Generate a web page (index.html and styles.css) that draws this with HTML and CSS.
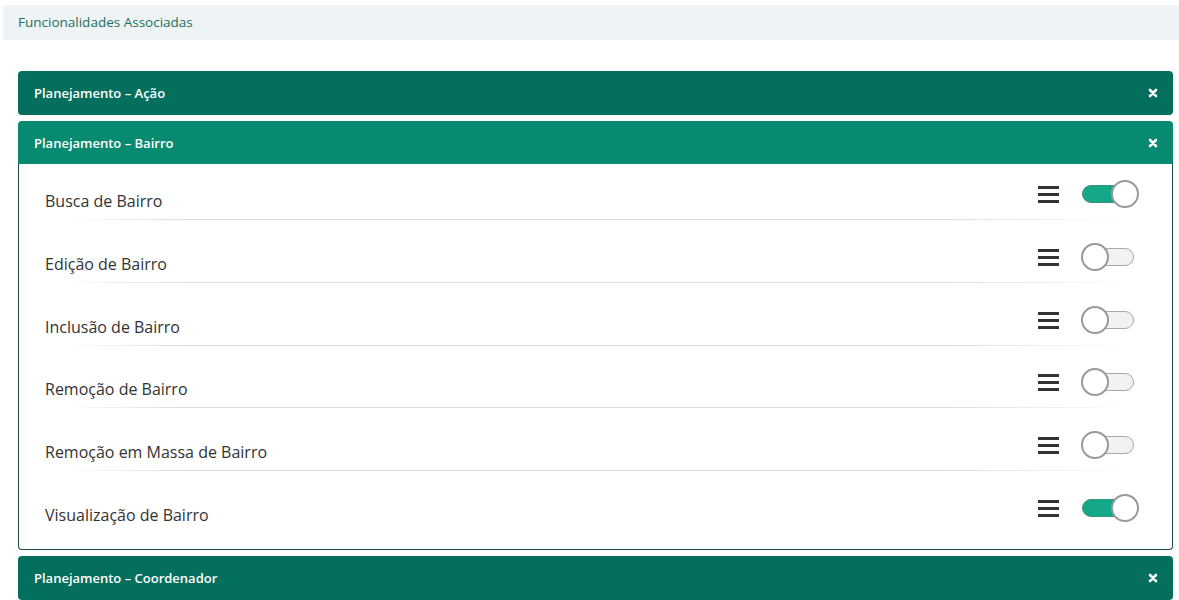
FILE: index.html
```html
<!DOCTYPE html>
<html lang="pt">
<head>
    <meta charset="UTF-8">
    <meta name="viewport" content="width=device-width, initial-scale=1.0">
    <title>Funcionalidades Associadas</title>
    <link rel="stylesheet" href="styles.css">
</head>
<body>
    <div class="page">
        <div class="section-title">Funcionalidades Associadas</div>

        <div class="panels">
            <div class="panel">
                <div class="panel-header dark">
                    <span>Planejamento – Ação</span>
                    <svg class="close" width="10" height="10" viewBox="0 0 10 10"><path d="M2 2 L8 8 M8 2 L2 8" stroke="#fff" stroke-width="2.6" stroke-linecap="round"/></svg>
                </div>
            </div>

            <div class="panel open">
                <div class="panel-header light">
                    <span>Planejamento – Bairro</span>
                    <svg class="close" width="10" height="10" viewBox="0 0 10 10"><path d="M2 2 L8 8 M8 2 L2 8" stroke="#fff" stroke-width="2.6" stroke-linecap="round"/></svg>
                </div>
                <div class="panel-body">
                    <div class="item">
                        <span class="item-name">Busca de Bairro</span>
                        <span class="menu"><i></i><i></i><i></i></span>
                        <span class="toggle on"><b></b></span>
                    </div>
                    <div class="item">
                        <span class="item-name">Edição de Bairro</span>
                        <span class="menu"><i></i><i></i><i></i></span>
                        <span class="toggle"><b></b></span>
                    </div>
                    <div class="item">
                        <span class="item-name">Inclusão de Bairro</span>
                        <span class="menu"><i></i><i></i><i></i></span>
                        <span class="toggle"><b></b></span>
                    </div>
                    <div class="item">
                        <span class="item-name">Remoção de Bairro</span>
                        <span class="menu"><i></i><i></i><i></i></span>
                        <span class="toggle"><b></b></span>
                    </div>
                    <div class="item">
                        <span class="item-name">Remoção em Massa de Bairro</span>
                        <span class="menu"><i></i><i></i><i></i></span>
                        <span class="toggle"><b></b></span>
                    </div>
                    <div class="item">
                        <span class="item-name">Visualização de Bairro</span>
                        <span class="menu"><i></i><i></i><i></i></span>
                        <span class="toggle on"><b></b></span>
                    </div>
                </div>
            </div>

            <div class="panel">
                <div class="panel-header dark">
                    <span>Planejamento – Coordenador</span>
                    <svg class="close" width="10" height="10" viewBox="0 0 10 10"><path d="M2 2 L8 8 M8 2 L2 8" stroke="#fff" stroke-width="2.6" stroke-linecap="round"/></svg>
                </div>
            </div>
        </div>
    </div>
</body>
</html>
```

FILE: styles.css
```css
body {
    margin: 0;
    padding: 0;
    background-color: #fff;
    font-family: "Open Sans", Arial, sans-serif;
    color: #333;
}

.page {
    padding: 5px 0 0 3px;
}

.section-title {
    background-color: #eef3f5;
    color: #1f6f5f;
    font-size: 13.5px;
    height: 35px;
    line-height: 34px;
    padding-left: 15px;
}

.panels {
    margin: 31px 6px 0 15px;
    display: flex;
    flex-direction: column;
    gap: 6px;
}

.panel-header {
    height: 44px;
    display: flex;
    justify-content: space-between;
    align-items: center;
    padding: 0 16px 0 16px;
    color: #fff;
    font-size: 13px;
    font-weight: 600;
    border-radius: 4px;
}

.panel-header.dark {
    background-color: #046f5c;
}

.panel-header.light {
    height: 43px;
    background-color: #078a6f;
    border-radius: 4px 4px 0 0;
}

.close {
    margin-right: -1px;
}

.panel-body {
    border: 1px solid #1e4c44;
    border-top: none;
    border-radius: 0 0 4px 4px;
    padding: 0 34px 15px 26px;
}

.item {
    display: flex;
    align-items: flex-end;
    height: 63px;
    position: relative;
}

.item:first-child {
    height: 56px;
}

.item:nth-child(4) {
    height: 62px;
}

.item::after {
    content: "";
    position: absolute;
    left: 16px;
    right: 8px;
    bottom: 0;
    height: 1px;
    background: linear-gradient(to right, rgba(221, 221, 221, 0), #dcdcdc 12%, #dcdcdc 82%, rgba(221, 221, 221, 0));
}

.item:last-child::after {
    display: none;
}

.item-name {
    flex: 1;
    font-size: 16px;
    line-height: 20px;
    padding-bottom: 9px;
    color: #333;
}

.menu {
    display: flex;
    flex-direction: column;
    gap: 4px;
    margin-bottom: 17px;
    margin-right: 22px;
}

.menu i {
    display: block;
    width: 21px;
    height: 3px;
    background-color: #333;
}

.toggle {
    position: relative;
    width: 57px;
    height: 28px;
    margin-bottom: 12px;
}

.toggle::before {
    content: "";
    position: absolute;
    left: 1px;
    right: 4px;
    top: 5px;
    height: 16px;
    border-radius: 9px;
    background-color: #f2f2f2;
    border: 1px solid #a8a8a8;
}

.toggle b {
    position: absolute;
    top: 0;
    left: 0;
    width: 24px;
    height: 24px;
    border-radius: 50%;
    background-color: #fff;
    border: 2px solid #999;
}

.toggle.on::before {
    background-color: #14a889;
    border-color: #3e8f7c;
}

.toggle.on b {
    left: 30px;
}
```
